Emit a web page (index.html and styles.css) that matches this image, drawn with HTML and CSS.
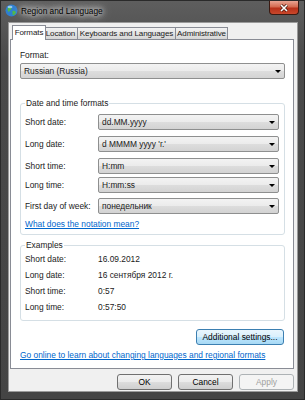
FILE: index.html
```html
<!DOCTYPE html>
<html lang="en">
<head>
    <meta charset="UTF-8">
    <title>Region and Language</title>
    <link rel="stylesheet" href="styles.css">
</head>
<body>
    <div class="window">
        <div class="titlebar">
            <svg class="app-icon" width="13" height="13" viewBox="0 0 13 13">
                <circle cx="6.5" cy="6.5" r="6" fill="#2f7fd0"/>
                <path d="M3 3.5 C4.5 2.5 6 3 6.5 4.5 C6 6 4.5 6.5 4 8 C3 7.5 2 6 3 3.5 Z" fill="#4fb848"/>
                <path d="M7.5 7 C9 6.5 10.5 7 11 8.5 C10 10.5 8.5 11.5 7.5 11 C8 9.5 7 8 7.5 7 Z" fill="#4fb848"/>
                <ellipse cx="5" cy="3" rx="2.5" ry="1.2" fill="#bfe3ff" opacity="0.7"/>
            </svg>
            <span class="title">Region and Language</span>
            <div class="close-button">
                <svg width="10" height="8" viewBox="0 0 10 8">
                    <path d="M2 1 L8 7 M8 1 L2 7" stroke="#4a1a10" stroke-width="3"/>
                    <path d="M2 1 L8 7 M8 1 L2 7" stroke="#ffffff" stroke-width="1.6"/>
                </svg>
            </div>
        </div>

        <div class="client">
            <div class="tabs">
                <div class="tab active tab-formats">Formats</div>
                <div class="tab tab-location">Location</div>
                <div class="tab tab-keyboards">Keyboards and Languages</div>
                <div class="tab tab-admin">Administrative</div>
            </div>

            <div class="panel">
                <div class="label">Format:</div>
                <div class="combo">Russian (Russia)</div>

                <fieldset class="group formats">
                    <legend>Date and time formats</legend>
                    <div class="row"><span class="row-label">Short date:</span><div class="combo">dd.MM.yyyy</div></div>
                    <div class="row"><span class="row-label">Long date:</span><div class="combo">d MMMM yyyy 'г.'</div></div>
                    <div class="row"><span class="row-label">Short time:</span><div class="combo">H:mm</div></div>
                    <div class="row"><span class="row-label">Long time:</span><div class="combo">H:mm:ss</div></div>
                    <div class="row"><span class="row-label">First day of week:</span><div class="combo">понедельник</div></div>
                    <a class="link notation" href="#">What does the notation mean?</a>
                </fieldset>

                <fieldset class="group examples">
                    <legend>Examples</legend>
                    <div class="example"><span class="row-label">Short date:</span><span>16.09.2012</span></div>
                    <div class="example"><span class="row-label">Long date:</span><span>16 сентября 2012 г.</span></div>
                    <div class="example"><span class="row-label">Short time:</span><span>0:57</span></div>
                    <div class="example"><span class="row-label">Long time:</span><span>0:57:50</span></div>
                </fieldset>

                <div class="actions">
                    <button class="btn hot">Additional settings...</button>
                </div>
                <a class="link online" href="#">Go online to learn about changing languages and regional formats</a>
            </div>

            <div class="footer">
                <button class="btn">OK</button>
                <button class="btn">Cancel</button>
                <button class="btn" disabled>Apply</button>
            </div>
        </div>
    </div>
</body>
</html>
```

FILE: styles.css
```css
body {
    margin: 0;
    font-family: "Liberation Sans", "Noto Sans", Arial, sans-serif;
    font-size: 8.4px;
    color: #1a1a1a;
}
.window {
    width: 305px;
    height: 400px;
    box-sizing: border-box;
    display: flex;
    flex-direction: column;
    background: linear-gradient(#5e5e5e, #4a4a4a 60px, #444444);
    border: 1px solid #2a2a2a;
}
.titlebar {
    height: 21px;
    display: flex;
    align-items: flex-start;
    padding-right: 5px;
}
.app-icon {
    margin: 3px 0 0 4px;
}
.title {
    margin: 4px 0 0 3px;
    font-size: 8.3px;
    line-height: 12px;
    color: #000;
    text-shadow: 0 0 5px #fff, 0 0 8px rgba(255, 255, 255, 0.9), 0 0 12px rgba(255, 255, 255, 0.7);
}
.close-button {
    margin: 0 0 0 auto;
    width: 30px;
    height: 14px;
    box-sizing: border-box;
    border: 1px solid #3b1a12;
    border-top: none;
    border-radius: 0 0 4px 4px;
    background: linear-gradient(#e9a493, #d46a50 45%, #b8311a 55%, #c9482c);
    display: flex;
    align-items: center;
    justify-content: center;
}
.client {
    flex: 1;
    margin: 0 6px 7px 7px;
    background: #f0f0f0;
    border: 1px solid #9a9a9a;
    padding: 2px 3px 0 1px;
    display: flex;
    flex-direction: column;
}
.tabs {
    display: flex;
    height: 14px;
    padding-left: 3px;
}
.tab {
    box-sizing: border-box;
    height: 12px;
    margin-top: 2px;
    line-height: 11px;
    font-size: 8px;
    letter-spacing: -0.1px;
    text-align: center;
    border: 1px solid #898c95;
    border-bottom: none;
    margin-left: -1px;
    background: linear-gradient(#f2f2f2, #e4e4e4 50%, #d5d5d5);
    white-space: nowrap;
    overflow: hidden;
}
.tab.active {
    height: 15px;
    margin-top: 0;
    background: #fff;
    position: relative;
    z-index: 1;
    line-height: 13px;
    margin-right: -2px;
}
.tab-formats { width: 34px; }
.tab-location { width: 35px; }
.tab-keyboards { width: 99px; }
.tab-admin { width: 53px; }
.panel {
    background: #fff;
    border: 1px solid #898c95;
    padding: 9px 8px 7px 9px;
}
.label {
    line-height: 12px;
}
.combo {
    box-sizing: border-box;
    height: 16px;
    margin-top: 2px;
    padding: 0 3px;
    border: 1px solid #8e8f8f;
    border-radius: 2px;
    background: linear-gradient(#f3f3f3, #ebebeb 50%, #dddddd 51%, #d3d3d3);
    display: flex;
    align-items: center;
    justify-content: space-between;
    white-space: nowrap;
}
.combo::after {
    content: "";
    border-left: 3px solid transparent;
    border-right: 3px solid transparent;
    border-top: 3px solid #000;
}
.group {
    margin: 0;
    border: 1px solid #d5dfe5;
    border-radius: 3px;
    padding: 5px 5px 4px 4px;
}
.group legend {
    padding: 0 1px;
    line-height: 12px;
}
.formats {
    margin-top: 18px;
}
.row {
    display: flex;
    align-items: center;
}
.row .combo {
    flex: 1;
    margin-top: 0;
}
.row + .row {
    margin-top: 6px;
}
.row:nth-of-type(4) {
    margin-top: 3px;
}
.row:nth-of-type(5) {
    margin-top: 5px;
}
.row-label {
    width: 73px;
    flex: none;
}
.link {
    display: block;
    color: #0066cc;
    text-decoration: underline;
    line-height: 12px;
}
.notation {
    margin-top: 4px;
}
.examples {
    margin-top: 4px;
    padding-top: 0;
    padding-bottom: 5px;
}
.example {
    display: flex;
    align-items: center;
    height: 16px;
}
.actions {
    display: flex;
    justify-content: flex-end;
    margin: 8px 1px 0 0;
}
.btn {
    box-sizing: border-box;
    height: 16px;
    padding: 0;
    font: inherit;
    color: #000;
    border: 1px solid #707070;
    border-radius: 3px;
    background: linear-gradient(#f2f2f2, #ebebeb 50%, #dddddd 51%, #cfcfcf);
}
.btn.hot {
    width: 88px;
    border-color: #3c7fb1;
    background: linear-gradient(#eaf6fd, #d9f0fc 50%, #bee6fd 51%, #a7d9f5);
}
.btn:disabled {
    color: #a0a0a0;
    border-color: #adb2b5;
    background: #f4f4f4;
}
.online {
    margin-top: 4px;
}
.footer {
    display: flex;
    justify-content: flex-end;
    gap: 6px;
    margin-top: 5px;
}
.footer .btn {
    width: 55px;
}
```
